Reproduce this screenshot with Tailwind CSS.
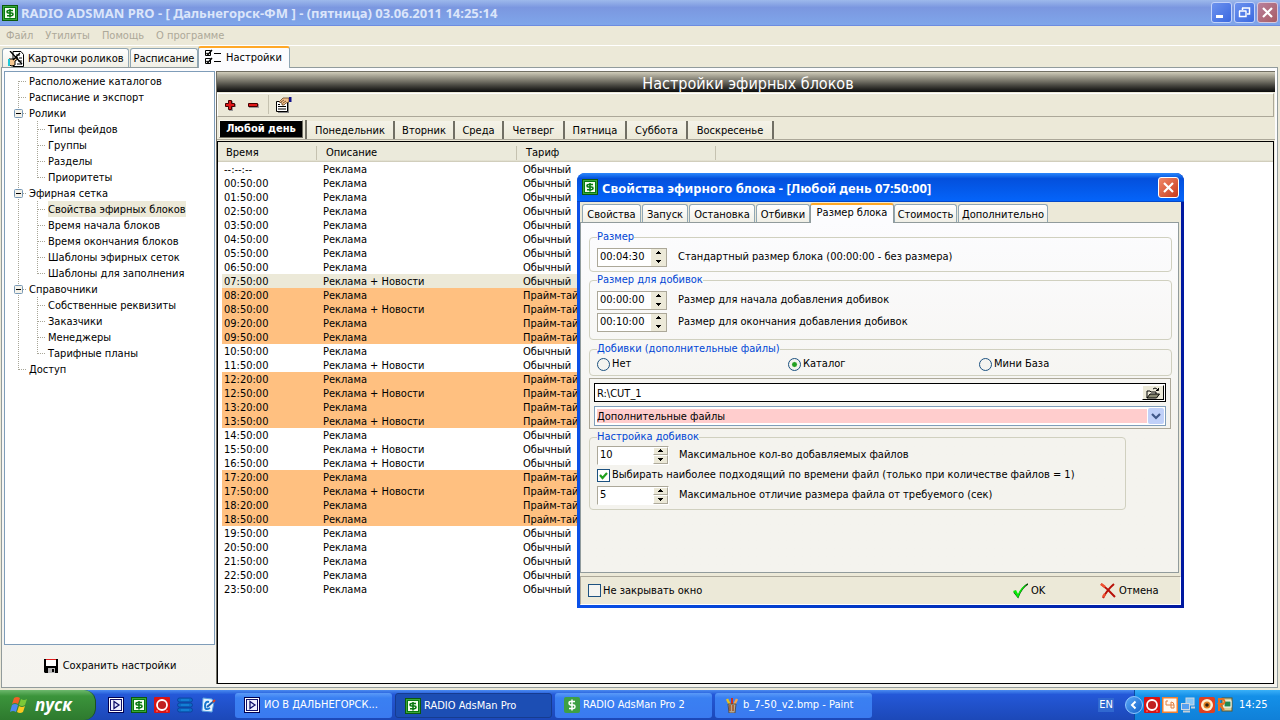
<!DOCTYPE html>
<html lang="ru">
<head>
<meta charset="utf-8">
<title>RADIO ADSMAN PRO</title>
<script src="https://cdn.jsdelivr.net/npm/@tailwindcss/browser@4"></script>
</head>
<body class="font-['DejaVu_Sans_Condensed','Noto_Sans',sans-serif] text-[11px] leading-[14px] text-black bg-[#ece9d8]">
<svg class="hidden" xmlns="http://www.w3.org/2000/svg">
  <symbol id="tee" viewBox="0 0 19 16"><path d="M8.500 0V16M9 8.500H17" stroke="#a8a698" stroke-dasharray="1 1" fill="none"/></symbol>
  <symbol id="top" viewBox="0 0 19 16"><path d="M8.500 8V16M9 8.500H17" stroke="#a8a698" stroke-dasharray="1 1" fill="none"/></symbol>
  <symbol id="elbow" viewBox="0 0 19 16"><path d="M8.500 0V9M9 8.500H17" stroke="#a8a698" stroke-dasharray="1 1" fill="none"/></symbol>
  <symbol id="line" viewBox="0 0 19 16"><path d="M8.500 0V16" stroke="#a8a698" stroke-dasharray="1 1" fill="none"/></symbol>
  <symbol id="node" viewBox="0 0 19 16"><path d="M8.500 0V16M13 8.500H17" stroke="#a8a698" stroke-dasharray="1 1" fill="none"/><rect x="4.500" y="4.500" width="8" height="8" rx="1" fill="#f4f2ea" stroke="#7898b5"/><path d="M6 8.500h5" stroke="#000"/></symbol>
  <symbol id="dollar" viewBox="0 0 16 16"><rect width="16" height="16" fill="#0b5a0b"/><rect x="1" y="1" width="14" height="14" fill="#3aa63a"/><rect x="2.500" y="2.500" width="11" height="11" fill="#f4fff0" stroke="#0a7a12"/><path d="M11 5.500H6.500Q5 5.500 5 6.700T6.500 8h3Q11 8 11 9.300T9.500 10.700H5M8 4v8.500" fill="none" stroke="#0a7a12" stroke-width="1.600"/></symbol>
  <symbol id="play" viewBox="0 0 16 16"><rect x=".5" y=".5" width="15" height="15" fill="#fff" stroke="#000050"/><rect x="2.500" y="2.500" width="11" height="11" fill="#eef0ff" stroke="#10106a"/><path d="M6 4.500v7l5-3.500z" fill="#dfe6ff" stroke="#10106a" stroke-width="1.300"/></symbol>
  <symbol id="ring" viewBox="0 0 16 16"><rect width="16" height="16" rx="1" fill="#d81414"/><circle cx="8" cy="8" r="5" fill="#c02020" stroke="#fff" stroke-width="1.800"/><path d="M2 14h2M12 14h2" stroke="#f88"/></symbol>
  <symbol id="updown" viewBox="0 0 7 4"><path d="M3 0h1v1h1v1h1v1H1V2h1V1h1z"/></symbol>
</svg>

<div class="flex flex-col min-h-screen">
  <header class="flex items-center h-[26px] pl-[2px] pr-[2px] gap-[3px] bg-linear-to-b from-[#9db9eb] via-[#7b97e0] via-30% to-[#7fa6ea] border-b border-[#6d8ce0]">
    <svg class="size-4"><use href="#dollar"/></svg>
    <h1 class="flex-1 font-['Noto_Sans',sans-serif] font-bold text-[13px] leading-4 text-[#dbe5fa]">RADIO ADSMAN PRO - [ Дальнегорск-ФМ ] - (пятница) 03.06.2011 14:25:14</h1>
    <div class="flex gap-[2px]">
      <button aria-label="Свернуть" class="size-[21px] rounded-[3px] border border-[#c3d3fa] bg-linear-to-br from-[#6d92ee] to-[#3a68e0]"><svg viewBox="0 0 19 19" class="size-full"><path d="M4 13.500h7" stroke="#fff" stroke-width="3"/></svg></button>
      <button aria-label="Восстановить" class="size-[21px] rounded-[3px] border border-[#c3d3fa] bg-linear-to-br from-[#6d92ee] to-[#3a68e0]"><svg viewBox="0 0 19 19" class="size-full" fill="none" stroke="#fff"><path d="M7 5h7.500v6H12M7.500 5v2" stroke-width="1.500"/><path d="M4 8h7.500M4.500 8v5.500h6.500V8" stroke-width="1.400"/></svg></button>
      <button aria-label="Закрыть" class="size-[21px] rounded-[3px] border border-[#d8c8dc] bg-linear-to-br from-[#b8809c] to-[#a85c64]"><svg viewBox="0 0 19 19" class="size-full"><path d="M5 5l9 9M14 5l-9 9" stroke="#fff" stroke-width="2.200"/></svg></button>
    </div>
  </header>

  <nav class="flex items-center h-5 pl-[6px] gap-3 text-[#aca899] border-b border-white">
    <a href="#">Файл</a><a href="#">Утилиты</a><a href="#">Помощь</a><a href="#">О программе</a>
  </nav>

  <div class="flex items-end h-[21px] pl-[2px] gap-px">
    <button class="flex items-center h-[19px] w-[127px] pl-[5px] gap-[4px] pt-[2px] whitespace-nowrap rounded-t-[3px] border border-b-0 border-[#91a7b4] bg-linear-to-b from-white to-[#f0efe6]">
      <svg class="size-4" viewBox="0 0 16 16"><path d="M5 .5h8l2.500 3v12H5z" fill="#fff" stroke="#000"/><path d="M8 4h4M11 7h3M10 10h4M9 13h5" stroke="#000"/><path d="M1 8h5l3-2 1 2-3 2v4l-3 1-3-1z" fill="#f8c890" stroke="#000"/><path d="M0 8h2v7H0z" fill="#20c8d8"/><path d="M2 0l12 13M12 2L5 9" stroke="#000" stroke-width="1.300"/></svg>
      Карточки роликов</button>
    <button class="h-[19px] w-[68px] pt-[2px] whitespace-nowrap rounded-t-[3px] border border-b-0 border-[#91a7b4] bg-linear-to-b from-white to-[#f0efe6]">Расписание</button>
    <button class="flex items-center h-[22px] -mb-px z-10 w-[92px] -ml-px pl-[6px] gap-[5px] whitespace-nowrap rounded-t-[3px] border border-b-0 border-[#91a7b4] border-t-2 border-t-[#ffa827] bg-[#fcfcfe]">
      <svg class="size-4 mb-[3px]" viewBox="0 0 16 16"><path d="M.5 1.500h5v5h-5zM.5 9.500h5v5h-5z" fill="#fff" stroke="#000"/><path d="M1.500 4l1.500 1.500L7 1M1.500 12L3 13.500 7 9" fill="none" stroke="#000" stroke-width="1.500"/><path d="M9 4.500h7M9 12.500h7" stroke="#000"/></svg>
      Настройки</button>
  </div>

  <main class="flex flex-1 mx-px mr-[2px] mb-[2px] border border-[#919b9c] bg-linear-to-b from-[#fcfcfe] to-[#f4f3ee] pl-[2px] pt-[3px] pb-[3px] pr-[2px]">
    <aside class="flex flex-col w-[211px] shrink-0">
      <ul id="tree" class="flex-1 border border-[#7f9db9] bg-white pl-[5px] pt-px"></ul>
      <button class="flex items-center justify-center gap-[4px] h-[39px] pt-[2px]">
        <svg class="size-4" viewBox="0 0 16 16"><path d="M1 1h14v14H2L1 14z" fill="#000"/><path d="M3 1h10v7H3z" fill="#fff"/><path d="M3 1h10v1H3z" fill="#e02020"/><path d="M5 10h7v5H5z" fill="#b8b8b8"/><path d="M9 11h2v3H9z" fill="#000"/></svg>
        Сохранить настройки</button>
    </aside>

    <section class="flex flex-col flex-1 min-w-0 border-l border-t border-[#716f64] bg-[#ece9d8] ml-px">
      <h2 class="h-5 pl-[4px] text-center text-white text-base leading-6 bg-linear-to-b from-[#d0ccba] via-[#6c6a60] via-50% to-[#0c0c0c]">Настройки эфирных блоков</h2>
      <div class="flex items-center h-[24px] mt-px mr-px pb-px pl-[6px] border border-[#aca899] border-t-white border-l-white">
        <button aria-label="Добавить" class="w-[23px]"><svg class="size-3" viewBox="0 0 12 12"><path d="M5 2h4v3h3v3H9v4H5V8H2V5h3z" fill="#999"/><path d="M4.500 1.500h3v3h3v3h-3v3h-3v-3h-3v-3h3z" fill="#e01818" stroke="#400"/></svg></button>
        <button aria-label="Удалить" class="w-[21px]"><svg class="size-3" viewBox="0 0 12 12"><path d="M2 5h10v4H2z" fill="#999"/><path d="M1.500 4.500h9v3h-9z" fill="#e01818" stroke="#400"/></svg></button>
        <div class="w-px h-[19px] bg-[#c5c2b0]"></div>
        <button aria-label="Свойства" class="ml-[7px]"><svg class="size-4" viewBox="0 0 16 16"><path d="M2 5h11v11H2z" fill="#888"/><path d="M.5 4.500h11v10H.5z" fill="#fff" stroke="#000"/><path d="M2 7.500h2M2 9.500h8M2 12h8" stroke="#000"/><path d="M3 5l4-4h6v4l-3 1-2 2H6V6z" fill="#f4c08c" stroke="#604020" stroke-width=".8"/><path d="M5 5l3-2M7 6l3-2" stroke="#604020" stroke-width=".8"/><path d="M13 0h2.500v5H13z" fill="#10108c"/></svg></button>
      </div>
      <div id="days" class="flex items-end h-[22px] mt-px border-b border-[#aca899] pl-[2px]"></div>
      <div class="flex-1 mt-px mr-px border border-black bg-[linear-gradient(#ebeadb_18px,#c8c5b2_20px,#fff_20px)]">
        <table class="table-fixed w-[498px] border-collapse">
          <colgroup><col class="w-[4px]"><col class="w-[95px]"><col class="w-[200px]"><col class="w-[199px]"></colgroup>
          <tbody id="blocks"></tbody>
        </table>
      </div>
    </section>
  </main>

  <footer class="flex items-center h-[30px] bg-linear-to-b from-[#4a8af0] via-[#2458d8] via-15% to-[#1c48b8] text-white">
    <button class="flex items-center h-full w-[96px] pl-[10px] gap-[6px] rounded-r-xl bg-linear-to-b from-[#6cb86c] via-[#3b943b] via-20% to-[#2e7a2e] border-r border-[#1c5020]">
      <svg class="w-[19px] h-[18px]" viewBox="0 0 19 18"><path d="M4 2q3-2 6 0L8 8Q5 6 2 8z" fill="#f06028"/><path d="M11 3q3 2 6 0l-2 6q-3 2-6 0z" fill="#7cc838"/><path d="M2 9q3-2 6 0l-2 7q-3-2-6 0z" fill="#4c88f0"/><path d="M9 10q3 2 6 0l-2 6q-3 2-6 0z" fill="#fcc820"/></svg>
      <span class="font-['Open_Sans',sans-serif] font-bold italic text-[17px] leading-5">пуск</span>
    </button>
    <div class="flex gap-[7px] ml-[12px] w-[127px]">
      <svg class="size-4"><use href="#play"/></svg>
      <svg class="size-4"><use href="#dollar"/></svg>
      <svg class="size-4"><use href="#ring"/></svg>
      <svg class="size-4" viewBox="0 0 16 16"><g fill="#0c6cc8" stroke="#083c90" stroke-width=".7"><rect x=".5" y="1" width="15" height="4" rx="2"/><rect x=".5" y="6" width="15" height="4" rx="2"/><rect x=".5" y="11" width="15" height="4" rx="2"/></g><path d="M4 3h8M4 8h8M4 13h8" stroke="#1c90e0"/></svg>
      <svg class="size-4" viewBox="0 0 16 16"><path d="M3 1l9 1 2 3-2 10-10-1z" fill="#e8f4ff" stroke="#58a0e0"/><path d="M9 5q-4-1-4 4t5 2" fill="none" stroke="#1878d0" stroke-width="2"/><path d="M7 10l7-6" stroke="#1860b0" stroke-width="2"/><path d="M13 5l2-2" stroke="#e04020" stroke-width="2"/></svg>
    </div>
    <div class="flex flex-1 gap-[3px]">
      <button class="flex items-center h-[25px] w-[157px] px-[9px] gap-[4px] rounded-[3px] whitespace-nowrap bg-linear-to-b from-[#5a9af8] via-[#3a80f2] via-20% to-[#3a7af0]"><svg class="size-4"><use href="#play"/></svg>ИО В ДАЛЬНЕГОРСК...</button>
      <button class="flex items-center h-[25px] w-[157px] px-[9px] gap-[3px] pt-px rounded-[3px] whitespace-nowrap bg-[#1c4eb4] border border-[#163c90]"><svg class="size-4"><use href="#dollar"/></svg>RADIO AdsMan Pro</button>
      <button class="flex items-center h-[25px] w-[157px] px-[9px] gap-[3px] rounded-[3px] whitespace-nowrap bg-linear-to-b from-[#5a9af8] via-[#3a80f2] via-20% to-[#3a7af0]"><svg class="size-4" viewBox="0 0 16 16"><rect width="16" height="16" rx="2" fill="#3ea044"/><path d="M11 4.500H6.500Q5 4.500 5 6T6.500 8h3Q11 8 11 9.700T9.500 11.500H5M8 2.500v11" fill="none" stroke="#fff" stroke-width="1.500"/></svg>RADIO AdsMan Pro 2</button>
      <button class="flex items-center h-[25px] w-[157px] px-[9px] gap-[3px] rounded-[3px] whitespace-nowrap bg-linear-to-b from-[#5a9af8] via-[#3a80f2] via-20% to-[#3a7af0]"><svg class="size-4" viewBox="0 0 16 16"><path d="M6 8L3 2" stroke="#e8c020" stroke-width="2.500"/><path d="M8 8V1" stroke="#d03020" stroke-width="2"/><path d="M10 8l3-6" stroke="#f0a850" stroke-width="2.500"/><path d="M4 7h8l-1 9H5z" fill="#b8a890" stroke="#484038" stroke-width=".8"/><path d="M6 8v6M9 8v6" stroke="#a05020" stroke-width="1.500"/></svg>b_7-50_v2.bmp - Paint</button>
    </div>
    <button class="w-4 h-[14px] mr-[20px] bg-[#3068d0] text-center">EN</button>
    <div class="flex items-center h-full w-[146px] border-l border-[#0c4ca0] bg-linear-to-b from-[#38b0f8] via-[#1490e8] via-20% to-[#1080d8]">
      <button aria-label="Показать значки" class="size-[18px] -ml-[10px] rounded-full border border-[#90c8ff] bg-linear-to-br from-[#58a8f8] to-[#1060c8]"><svg viewBox="0 0 16 16" class="size-full"><path d="M9.500 4.500L6 8l3.500 3.500" fill="none" stroke="#fff" stroke-width="2"/></svg></button>
      <div class="flex gap-[2px] ml-px">
        <svg class="size-4"><use href="#ring"/></svg>
        <svg class="size-4" viewBox="0 0 16 16"><rect width="16" height="16" fill="#f08030"/><rect x="1.500" y="1.500" width="13" height="13" fill="#fff8f0"/><path d="M6 4H4v4h5v3M12 8H9V5q3 0 3 3v3H9" fill="none" stroke="#e08040"/></svg>
        <svg class="size-4" viewBox="0 0 16 16"><rect x="6" y="1" width="8" height="7" fill="#88c8f8" stroke="#d0d8e0"/><rect x="1.500" y="6.500" width="8" height="6" fill="#58a0f0" stroke="#d0d8e0"/><path d="M3 14.500h7M11 10.500h4" stroke="#c8d0d8" stroke-width="2"/></svg>
        <svg class="size-4 ml-px" viewBox="0 0 16 16"><rect width="16" height="16" rx="2" fill="#e04020"/><circle cx="8" cy="8" r="6" fill="#fff0d0"/><circle cx="8" cy="8" r="3.500" fill="#e08020"/><circle cx="8" cy="8" r="1.800" fill="#302010"/></svg>
        <svg class="size-4" viewBox="0 0 16 16"><rect x="5" y="1" width="10" height="13" fill="#d8d0a0" stroke="#605828"/><rect x="7" y="4" width="7" height="6" fill="#208850" stroke="#fff"/><path d="M2 14V2h4q3 3 0 5H2l5 6" fill="none" stroke="#e87020" stroke-width="2"/></svg>
      </div>
      <time class="ml-[6px]">14:25</time>
    </div>
  </footer>
</div>

<div role="dialog" aria-labelledby="dlg" class="absolute left-[577px] top-[173px] w-[607px] flex flex-col rounded-t-lg bg-linear-to-r from-[#0a50e8] to-[#0018a0] px-[3px] pb-[3px]">
  <div class="flex items-center h-[29px] -mx-[3px] px-[5px] gap-[4px] rounded-t-lg bg-linear-to-b from-[#2c88fc] via-[#0450dc] via-20% to-[#0464fa] border-b border-[#0448c8]">
    <svg class="size-4"><use href="#dollar"/></svg>
    <h2 id="dlg" class="flex-1 pt-[2px] font-['Noto_Sans',sans-serif] font-bold text-[13px] leading-4 text-white">Свойства эфирного блока - [Любой день 07:50:00]</h2>
    <button aria-label="Закрыть" class="size-[21px] rounded-[3px] border border-white bg-linear-to-br from-[#f08868] to-[#c83818]"><svg viewBox="0 0 19 19" class="size-full"><path d="M5 5l9 9M14 5l-9 9" stroke="#fff" stroke-width="2.200"/></svg></button>
  </div>
  <div class="bg-[#ece9d8]">
    <div id="dtabs" class="flex items-end h-5 pl-[2px] gap-px"></div>
    <form class="flex flex-col h-[351px] mr-[2px] pl-[8px] pr-[6px] pt-[7px] border border-[#919b9c] bg-linear-to-b from-[#fcfcfe] to-[#f4f3ee] to-60%">
      <fieldset class="h-[42px] border border-[#d0d0bf] rounded px-[7px] pt-[3px]">
        <legend class="text-[#0046d5]">Размер</legend>
        <div class="flex items-center gap-[11px] h-5"><span data-spin="00:04:30" data-id="s1"></span><label for="s1">Стандартный размер блока (00:00:00 - без размера)</label></div>
      </fieldset>
      <fieldset class="h-[67px] mt-px border border-[#d0d0bf] rounded px-[7px] pt-[3px]">
        <legend class="text-[#0046d5]">Размер для добивок</legend>
        <div class="flex items-center gap-[11px] h-5"><span data-spin="00:00:00" data-id="s2"></span><label for="s2">Размер для начала добавления добивок</label></div>
        <div class="flex items-center gap-[11px] h-5 mt-[2px]"><span data-spin="00:10:00" data-id="s3"></span><label for="s3">Размер для окончания добавления добивок</label></div>
      </fieldset>
      <fieldset class="h-[34px] mt-[2px] border border-[#d0d0bf] rounded px-[7px]">
        <legend class="text-[#0046d5]">Добивки (дополнительные файлы)</legend>
        <div class="grid grid-cols-[191px_191px_1fr] h-4 items-center">
          <label class="flex items-center gap-[2px]"><input type="radio" name="src" class="appearance-none size-[13px] rounded-full border border-[#1c5180] bg-[#f4f4f0] checked:bg-radial checked:from-[#21a121] checked:from-25% checked:to-[#f4f4f0] checked:to-40%">Нет</label>
          <label class="flex items-center gap-[2px]"><input type="radio" name="src" checked class="appearance-none size-[13px] rounded-full border border-[#1c5180] bg-[#f4f4f0] checked:bg-radial checked:from-[#21a121] checked:from-25% checked:to-[#f4f4f0] checked:to-40%">Каталог</label>
          <label class="flex items-center gap-[2px]"><input type="radio" name="src" class="appearance-none size-[13px] rounded-full border border-[#1c5180] bg-[#f4f4f0] checked:bg-radial checked:from-[#21a121] checked:from-25% checked:to-[#f4f4f0] checked:to-40%">Мини База</label>
        </div>
      </fieldset>
      <div class="flex flex-col gap-[4px] h-[51px] mt-[2px] mr-px border border-[#aca899] p-[4px]">
        <div class="flex h-[19px] border border-black bg-white p-px">
          <input aria-label="Каталог" value="R:\CUT_1" class="flex-1 pl-px pt-[2px] outline-none">
          <button type="button" aria-label="Обзор" class="w-[22px] flex justify-center items-center bg-[#ece9d8] border border-black border-t-white border-l-white"><svg class="w-[14px] h-3" viewBox="0 0 14 12"><path d="M1 11V4h3l1 1h5v2" fill="#ece9d8" stroke="#000"/><path d="M1 11l3-4h9.500l-3 4z" fill="#888870" stroke="#000"/><path d="M7 2q2-2 4 0l1 1M10 3.500h2.500V1" fill="none" stroke="#000"/></svg></button>
        </div>
        <div class="flex h-5 border border-[#7f9db9] bg-white p-px">
          <select aria-label="Вид файлов" class="flex-1 appearance-none bg-[#ffcdcd] border border-white px-0 pt-px"><option>Дополнительные файлы</option></select>
          <svg class="w-4 h-4 bg-[#c0d0f8] rounded-[2px]" viewBox="0 0 16 16"><path d="M4 6l4 4 4-4" fill="none" stroke="#405888" stroke-width="2.200"/></svg>
        </div>
      </div>
      <fieldset class="h-[80px] mt-px mr-[46px] border border-[#d0d0bf] rounded px-[7px] pt-px">
        <legend class="text-[#0046d5]">Настройка добивок</legend>
        <div class="flex items-center gap-[10px] h-5"><span data-spin="10" data-id="s4"></span><label for="s4">Максимальное кол-во добавляемых файлов</label></div>
        <label class="flex items-center gap-[2px] h-5"><span class="relative flex"><input type="checkbox" checked class="appearance-none size-[13px] border border-[#1c5180] bg-white"><svg class="absolute inset-0 size-[13px]" viewBox="0 0 13 13"><path d="M3 6l2.500 3L10 4" fill="none" stroke="#21a121" stroke-width="2.200"/></svg></span>Выбирать наиболее подходящий по времени файл (только при количестве файлов = 1)</label>
        <div class="flex items-center gap-[10px] h-5"><span data-spin="5" data-id="s5"></span><label for="s5">Максимальное отличие размера файла от требуемого (сек)</label></div>
      </fieldset>
    </form>
    <div class="flex items-center h-[29px] mt-[3px] pl-[7px] border border-[#aca899] border-r-white border-b-white">
      <label class="flex flex-1 items-center gap-[2px]"><input type="checkbox" class="appearance-none size-[13px] border border-[#1c5180] bg-[#f4f4f0]">Не закрывать окно</label>
      <button class="flex items-center gap-[3px] w-[88px]"><svg class="size-4" viewBox="0 0 16 16"><path d="M2 9l4 5Q10 4 16 1" fill="none" stroke="#043804" stroke-width="1.500"/><path d="M1 8l3-1 2 4Q9 4 15 1 9 7 6 15z" fill="#08e808"/></svg>OK</button>
      <button class="flex items-center gap-[3px] w-[80px]"><svg class="size-4" viewBox="0 0 16 16"><path d="M1 1q7 5 14 13M14 1Q7 7 3 15" fill="none" stroke="#b81008" stroke-width="2"/><path d="M1 1l4 3M3 14l2-3" stroke="#f05030" stroke-width="2.500"/></svg>Отмена</button>
    </div>
  </div>
</div>

<script>
const cell = n => `<svg class="w-[19px] h-4 shrink-0"><use href="#${n}"/></svg>`;
const tree = [['top',0,'Расположение каталогов'],['tee',0,'Расписание и экспорт'],['node',0,'Ролики'],['tee',1,'Типы фейдов'],['tee',1,'Группы'],['tee',1,'Разделы'],['elbow',1,'Приоритеты'],['node',0,'Эфирная сетка'],['tee',1,'Свойства эфирных блоков'],['tee',1,'Время начала блоков'],['tee',1,'Время окончания блоков'],['tee',1,'Шаблоны эфирных сеток'],['elbow',1,'Шаблоны для заполнения'],['node',0,'Справочники'],['tee',1,'Собственные реквизиты'],['tee',1,'Заказчики'],['tee',1,'Менеджеры'],['elbow',1,'Тарифные планы'],['elbow',0,'Доступ']];
document.getElementById('tree').innerHTML = tree.map(([k,l,t]) => `<li class="flex h-4 whitespace-nowrap">${l ? cell('line') : ''}${cell(k)}<span class="${t.startsWith('Свойства') ? 'leading-[18px] bg-[#ece9d8]' : 'leading-[18px]'}">${t}</span></li>`).join('');

const days = [['Понедельник',88],['Вторник',60],['Среда',49],['Четверг',61],['Пятница',62],['Суббота',61],['Воскресенье',86]];
document.getElementById('days').innerHTML = '<button class="h-[18px] w-[84px] mb-px border border-[#716f64] border-t-[#f8f7f0] border-l-[#f8f7f0] whitespace-nowrap bg-black text-white font-bold">Любой день</button><span class="w-[2px] h-[19px] ml-[2px] bg-[#716f64]"></span>' + days.map(([t,w]) => `<button class="h-[18px] pt-px whitespace-nowrap border-r-2 border-[#716f64] bg-linear-to-b from-[#f4f2e8] to-[#ece9d8]" style="width:${w}px">${t}</button>`).join('');

const prime = ['08:20','08:50','09:20','09:50','12:20','12:50','13:20','13:50','17:20','17:50','18:20','18:50'];
const news = ['07:50','08:50','11:50','12:50','13:50','15:50','16:50','17:50'];
const times = ['--:--','00:50','01:50','02:50','03:50','04:50','05:50','06:50','07:50','08:20','08:50','09:20','09:50','10:50','11:50','12:20','12:50','13:20','13:50','14:50','15:50','16:50','17:20','17:50','18:20','18:50','19:50','20:50','21:50','22:50','23:50'];
const head = ['Время','Описание','Тариф'].map((t,i) => `<th class="p-0 pt-px text-left font-normal" colspan="${i ? 1 : 2}"><div class="${i ? 'pl-[9px] border-r border-[#c5c2b0]' : 'pl-[8px] border-r border-[#c5c2b0]'}">${t}</div></th>`).join('');
document.getElementById('blocks').innerHTML = `<tr class="h-5">${head}</tr>` + times.map(t => {
  const row = prime.includes(t) ? 'bg-[#ffc080]' : t === '07:50' ? 'bg-[#ece9d8]' : '';
  const time = t + (t[0] === '-' ? ':--' : ':00');
  return `<tr class="h-[14px] leading-[12px]"><td class="p-0"></td><td class="p-0 pt-[2px] pl-[2px] ${row}">${time}</td><td class="p-0 pt-[2px] pl-[6px] ${row}">${news.includes(t) ? 'Реклама + Новости' : 'Реклама'}</td><td class="p-0 pt-[2px] pl-[6px] ${row}">${prime.includes(t) ? 'Прайм-тайм' : 'Обычный'}</td></tr>`;
}).join('');

document.getElementById('dtabs').innerHTML = [['Свойства',59],['Запуск',46],['Остановка',66],['Отбивки',54],['Размер блока',84],['Стоимость',63],['Дополнительно',90]].map(([t,w],i) => `<button class="${i === 4 ? 'h-5 -mb-px pb-[3px] -mx-px z-10 whitespace-nowrap rounded-t-[3px] border border-b-0 border-[#919b9c] border-t-2 border-t-[#ffa827] bg-[#fcfcfe]' : 'h-[18px] pt-[2px] whitespace-nowrap rounded-t-[3px] border border-b-0 border-[#91a7b4] bg-linear-to-b from-white to-[#f0efe6]'}" style="width:${w}px">${t}</button>`).join('');

document.querySelectorAll('[data-spin]').forEach(s => {
  const boxed = s.dataset.spin.length < 3;
  const half = boxed ? 'flex flex-1 items-center justify-center border border-white border-r-[#aca899] border-b-[#aca899]' : 'flex flex-1 items-center justify-center';
  s.className = boxed ? 'flex w-[72px] h-[19px] border border-[#aca899] border-r-white border-b-white bg-white' : 'flex w-[70px] h-[19px] border border-[#aca899] border-r-[#aca899] border-b-[#aca899] bg-white';
  s.innerHTML = `<input id="${s.dataset.id}" value="${s.dataset.spin}" class="flex-1 min-w-0 pl-[2px] outline-none"><span class="flex flex-col w-[15px] bg-[#ece9d8]"><button type="button" aria-label="Больше" class="${half}"><svg class="w-[7px] h-1"><use href="#updown"/></svg></button><button type="button" aria-label="Меньше" class="${half}"><svg class="w-[7px] h-1 rotate-180"><use href="#updown"/></svg></button></span>`;
});
</script>
</body>
</html>
